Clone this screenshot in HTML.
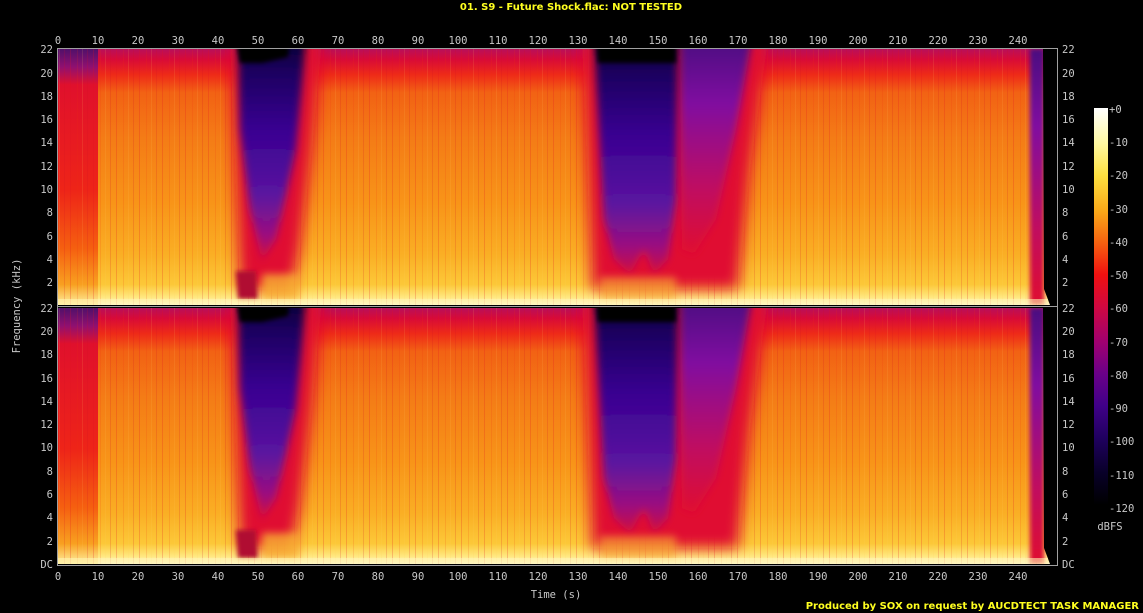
<!DOCTYPE html>
<html><head><meta charset="utf-8"><style>
html,body{margin:0;padding:0;background:#000;}
svg{display:block;}
text{font-family:"DejaVu Sans Mono","Liberation Mono",monospace;font-size:10.5px;fill:#c8c8c8;}
.t{font-family:"DejaVu Sans","Liberation Sans",sans-serif;font-weight:bold;fill:#ffff20;font-size:10px;}
</style></head><body>
<svg width="1143" height="613" viewBox="0 0 1143 613" xmlns="http://www.w3.org/2000/svg">
<defs>
<linearGradient id="gMain" x1="0" y1="0" x2="0" y2="1">
<stop offset="0" stop-color="#b8105a"/><stop offset="0.04" stop-color="#d80a38"/><stop offset="0.1" stop-color="#ee2a18"/>
<stop offset="0.17" stop-color="#f26214"/><stop offset="0.35" stop-color="#f47c16"/><stop offset="0.6" stop-color="#f89418"/>
<stop offset="0.8" stop-color="#faae24"/><stop offset="0.92" stop-color="#fcc838"/><stop offset="0.97" stop-color="#ffe880"/><stop offset="1" stop-color="#fffbd8"/>
</linearGradient>
<linearGradient id="gIntro" x1="0" y1="0" x2="0" y2="1">
<stop offset="0" stop-color="#50106a"/><stop offset="0.07" stop-color="#901070"/><stop offset="0.14" stop-color="#e0102c"/>
<stop offset="0.55" stop-color="#ee2418"/><stop offset="0.78" stop-color="#f56010"/><stop offset="0.92" stop-color="#f8a020"/><stop offset="1" stop-color="#fff0a0"/>
</linearGradient>
<linearGradient id="gDark" x1="0" y1="0" x2="0" y2="1">
<stop offset="0" stop-color="#080030"/><stop offset="0.15" stop-color="#1c0060"/><stop offset="0.4" stop-color="#380090"/>
<stop offset="0.7" stop-color="#5a14a0"/><stop offset="0.88" stop-color="#9a1080"/><stop offset="1" stop-color="#d01040"/>
</linearGradient>
<linearGradient id="gPurp" x1="0" y1="0" x2="0" y2="1">
<stop offset="0" stop-color="#4a0880"/><stop offset="0.3" stop-color="#8010a0"/><stop offset="0.7" stop-color="#c01060"/><stop offset="1" stop-color="#e01030"/>
</linearGradient>
<linearGradient id="gBar" x1="0" y1="0" x2="0" y2="1">
<stop offset="0" stop-color="#ffffff"/><stop offset="0.09" stop-color="#fff8a0"/><stop offset="0.17" stop-color="#fde040"/>
<stop offset="0.26" stop-color="#faa818"/><stop offset="0.34" stop-color="#f56010"/><stop offset="0.42" stop-color="#f01010"/>
<stop offset="0.5" stop-color="#d00840"/><stop offset="0.59" stop-color="#a00070"/><stop offset="0.67" stop-color="#6a0088"/>
<stop offset="0.75" stop-color="#400088"/><stop offset="0.83" stop-color="#200060"/><stop offset="0.92" stop-color="#080028"/><stop offset="1" stop-color="#000000"/>
</linearGradient>
<pattern id="streak" width="23" height="256" patternUnits="userSpaceOnUse">
<rect x="1" y="0" width="1" height="600" fill="#e01020" opacity="0.22"/>
<rect x="8" y="0" width="1" height="600" fill="#e83010" opacity="0.15"/>
<rect x="13" y="0" width="1" height="600" fill="#ffd060" opacity="0.12"/>
<rect x="18" y="0" width="1" height="600" fill="#d01020" opacity="0.18"/>
</pattern>
<filter id="b4" x="-50%" y="-50%" width="200%" height="200%"><feGaussianBlur stdDeviation="4"/></filter>
<filter id="b8" x="-50%" y="-50%" width="200%" height="200%"><feGaussianBlur stdDeviation="7"/></filter>
<filter id="b2" x="-50%" y="-50%" width="200%" height="200%"><feGaussianBlur stdDeviation="2"/></filter>
<clipPath id="cp1"><rect x="58" y="49" width="999" height="256"/></clipPath>
<clipPath id="cp2"><rect x="58" y="308" width="999" height="256"/></clipPath>
</defs>
<text class="t" x="571" y="10" text-anchor="middle">01. S9 - Future Shock.flac: NOT TESTED</text>

<g clip-path="url(#cp1)">
<g transform="translate(0,49)">
<rect x="58" y="0" width="999" height="256" fill="url(#gMain)"/>
<rect x="58" y="0" width="40" height="256" fill="url(#gIntro)"/>
<rect x="58" y="0" width="999" height="256" fill="url(#streak)"/>
<polygon points="230,-10 322,-10 312,100 300,200 292,240 240,240" fill="#e01030" filter="url(#b8)"/>
<polygon points="238,-10 306,-10 296,100 276,190 262,212 250,160 240,80" fill="url(#gDark)" filter="url(#b4)"/>
<polygon points="236,-10 290,-10 288,8 262,14 240,14" fill="#000" filter="url(#b2)"/>
<polygon points="236,222 256,222 258,250 238,250" fill="#b01030" filter="url(#b2)"/>
<polygon points="262,225 300,225 300,250 262,250" fill="#f8b030" opacity="0.8" filter="url(#b4)"/>
<polygon points="582,-10 768,-10 750,120 738,240 592,240" fill="#e01030" filter="url(#b8)"/>
<polygon points="680,-10 752,-10 736,80 716,170 694,205 682,200" fill="url(#gPurp)" filter="url(#b4)"/>
<polygon points="594,-10 678,-10 676,150 668,210 654,225 644,200 630,225 614,210 604,170" fill="url(#gDark)" filter="url(#b4)"/>
<polygon points="596,-10 676,-10 676,14 598,14" fill="#000" filter="url(#b2)"/>
<polygon points="600,228 676,228 676,250 600,250" fill="#f8a830" opacity="0.6" filter="url(#b4)"/>
<rect x="1030" y="0" width="14" height="256" fill="url(#gPurp)" filter="url(#b2)"/>
<polygon points="1040,0 1057,0 1057,256 1050,256 1044,240 1043,0" fill="#000"/>
<rect x="58" y="250" width="990" height="6" fill="#fff4b0" opacity="0.6"/>
</g>
</g>

<g clip-path="url(#cp2)">
<g transform="translate(0,308)">
<rect x="58" y="0" width="999" height="256" fill="url(#gMain)"/>
<rect x="58" y="0" width="40" height="256" fill="url(#gIntro)"/>
<rect x="58" y="0" width="999" height="256" fill="url(#streak)"/>
<polygon points="230,-10 322,-10 312,100 300,200 292,240 240,240" fill="#e01030" filter="url(#b8)"/>
<polygon points="238,-10 306,-10 296,100 276,190 262,212 250,160 240,80" fill="url(#gDark)" filter="url(#b4)"/>
<polygon points="236,-10 290,-10 288,8 262,14 240,14" fill="#000" filter="url(#b2)"/>
<polygon points="236,222 256,222 258,250 238,250" fill="#b01030" filter="url(#b2)"/>
<polygon points="262,225 300,225 300,250 262,250" fill="#f8b030" opacity="0.8" filter="url(#b4)"/>
<polygon points="582,-10 768,-10 750,120 738,240 592,240" fill="#e01030" filter="url(#b8)"/>
<polygon points="680,-10 752,-10 736,80 716,170 694,205 682,200" fill="url(#gPurp)" filter="url(#b4)"/>
<polygon points="594,-10 678,-10 676,150 668,210 654,225 644,200 630,225 614,210 604,170" fill="url(#gDark)" filter="url(#b4)"/>
<polygon points="596,-10 676,-10 676,14 598,14" fill="#000" filter="url(#b2)"/>
<polygon points="600,228 676,228 676,250 600,250" fill="#f8a830" opacity="0.6" filter="url(#b4)"/>
<rect x="1030" y="0" width="14" height="256" fill="url(#gPurp)" filter="url(#b2)"/>
<polygon points="1040,0 1057,0 1057,256 1050,256 1044,240 1043,0" fill="#000"/>
<rect x="58" y="250" width="990" height="6" fill="#fff4b0" opacity="0.6"/>
</g>
</g>

<g stroke="#a0a0a0" stroke-width="1" fill="none">
<rect x="57.5" y="48.5" width="1000" height="517"/>
<line x1="57" y1="306.5" x2="1058" y2="306.5"/>
</g>
<g text-anchor="middle">
<text x="58" y="44">0</text><text x="98" y="44">10</text><text x="138" y="44">20</text><text x="178" y="44">30</text><text x="218" y="44">40</text><text x="258" y="44">50</text><text x="298" y="44">60</text><text x="338" y="44">70</text><text x="378" y="44">80</text><text x="418" y="44">90</text><text x="458" y="44">100</text><text x="498" y="44">110</text><text x="538" y="44">120</text><text x="578" y="44">130</text><text x="618" y="44">140</text><text x="658" y="44">150</text><text x="698" y="44">160</text><text x="738" y="44">170</text><text x="778" y="44">180</text><text x="818" y="44">190</text><text x="858" y="44">200</text><text x="898" y="44">210</text><text x="938" y="44">220</text><text x="978" y="44">230</text><text x="1018" y="44">240</text>
<text x="58" y="580">0</text><text x="98" y="580">10</text><text x="138" y="580">20</text><text x="178" y="580">30</text><text x="218" y="580">40</text><text x="258" y="580">50</text><text x="298" y="580">60</text><text x="338" y="580">70</text><text x="378" y="580">80</text><text x="418" y="580">90</text><text x="458" y="580">100</text><text x="498" y="580">110</text><text x="538" y="580">120</text><text x="578" y="580">130</text><text x="618" y="580">140</text><text x="658" y="580">150</text><text x="698" y="580">160</text><text x="738" y="580">170</text><text x="778" y="580">180</text><text x="818" y="580">190</text><text x="858" y="580">200</text><text x="898" y="580">210</text><text x="938" y="580">220</text><text x="978" y="580">230</text><text x="1018" y="580">240</text>
</g>
<g text-anchor="end">
<text x="53" y="53">22</text><text x="53" y="77">20</text><text x="53" y="100">18</text><text x="53" y="123">16</text><text x="53" y="146">14</text><text x="53" y="170">12</text><text x="53" y="193">10</text><text x="53" y="216">8</text><text x="53" y="240">6</text><text x="53" y="263">4</text><text x="53" y="286">2</text>
<text x="53" y="312">22</text><text x="53" y="335">20</text><text x="53" y="358">18</text><text x="53" y="382">16</text><text x="53" y="405">14</text><text x="53" y="428">12</text><text x="53" y="451">10</text><text x="53" y="475">8</text><text x="53" y="498">6</text><text x="53" y="521">4</text><text x="53" y="545">2</text><text x="53" y="568">DC</text>
</g>
<g>
<text x="1062" y="53">22</text><text x="1062" y="77">20</text><text x="1062" y="100">18</text><text x="1062" y="123">16</text><text x="1062" y="146">14</text><text x="1062" y="170">12</text><text x="1062" y="193">10</text><text x="1062" y="216">8</text><text x="1062" y="240">6</text><text x="1062" y="263">4</text><text x="1062" y="286">2</text>
<text x="1062" y="312">22</text><text x="1062" y="335">20</text><text x="1062" y="358">18</text><text x="1062" y="382">16</text><text x="1062" y="405">14</text><text x="1062" y="428">12</text><text x="1062" y="451">10</text><text x="1062" y="475">8</text><text x="1062" y="498">6</text><text x="1062" y="521">4</text><text x="1062" y="545">2</text><text x="1062" y="568">DC</text>
</g>
<text x="556" y="598" text-anchor="middle">Time (s)</text>
<text transform="translate(20,306) rotate(-90)" text-anchor="middle">Frequency (kHz)</text>
<rect x="1094" y="108" width="14" height="397" fill="url(#gBar)"/>
<g>
<text x="1109" y="113">+0</text><text x="1109" y="146">-10</text><text x="1109" y="179">-20</text><text x="1109" y="213">-30</text><text x="1109" y="246">-40</text><text x="1109" y="279">-50</text><text x="1109" y="312">-60</text><text x="1109" y="346">-70</text><text x="1109" y="379">-80</text><text x="1109" y="412">-90</text><text x="1109" y="445">-100</text><text x="1109" y="479">-110</text><text x="1109" y="512">-120</text>
</g>
<text x="1110" y="530" text-anchor="middle">dBFS</text>
<text class="t" x="1139" y="609" text-anchor="end">Produced by SOX on request by AUCDTECT TASK MANAGER</text>
</svg>
</body></html>
